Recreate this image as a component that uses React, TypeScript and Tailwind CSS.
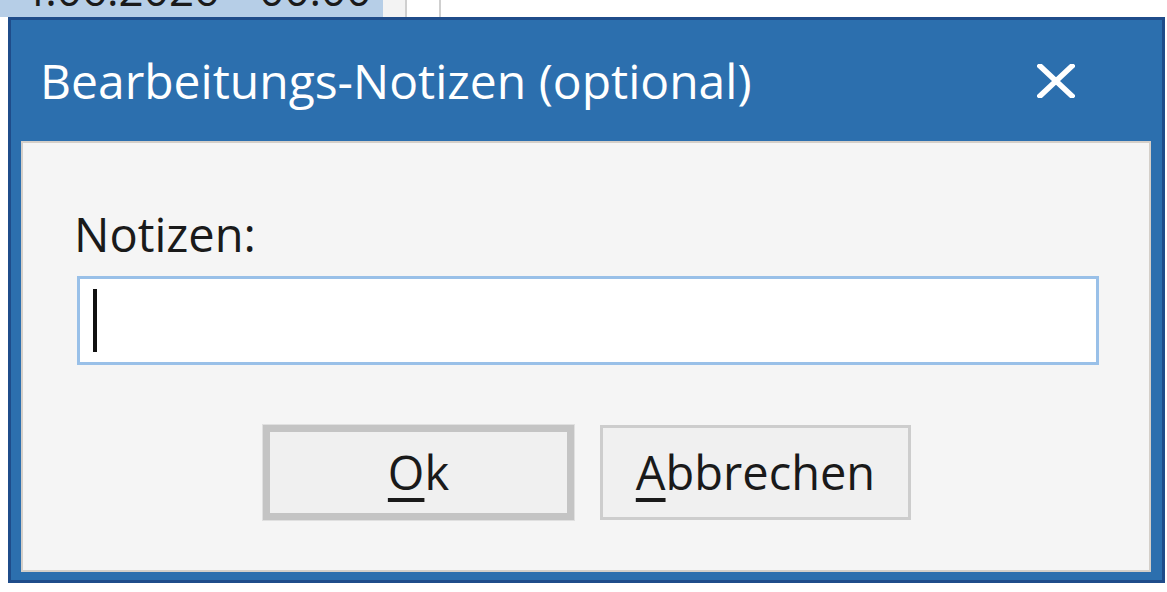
import React from "react";

export default function App() {
  return (
    <div className="relative h-[592px] w-[1167px] overflow-hidden bg-white font-['Open_Sans',sans-serif] text-[#1a1a1a]">
      {/* table row behind the dialog, only its lower edge shows */}
      <div className="flex h-[17px]">
        <div className="h-full w-[383px] overflow-hidden bg-[#b6cee7] pl-[20px]">
          <div className="mt-[-34px] flex gap-[40px] text-[44px] leading-[46px] whitespace-nowrap">
            <span>4.06.2026</span>
            <span>00:00</span>
          </div>
        </div>
        <div className="h-full w-[22px] bg-[#f3f3f3]" />
        <div className="h-full w-[2px] bg-[#cfcfcf]" />
        <div className="h-full w-[32px] bg-white" />
        <div className="h-full w-[2px] bg-[#cfcfcf]" />
        <div className="h-full flex-1 bg-white" />
      </div>

      {/* dialog */}
      <div className="ml-[8px] flex h-[566px] w-[1157px] flex-col border-[3px] border-[#1f4c8a] bg-[#2c6fae] pb-[8px] pl-[10px] pr-[11px]">
        <div className="flex h-[121px] shrink-0 items-center justify-between pl-[19px] pr-[76px]">
          <span className="text-[48px] leading-[48px] whitespace-nowrap text-white">
            Bearbeitungs-Notizen (optional)
          </span>
          <svg width="38" height="34" viewBox="0 0 38 34" fill="none">
            <path d="M3 2 L35 32 M35 2 L3 32" stroke="white" strokeWidth="5.5" strokeLinecap="square" />
          </svg>
        </div>

        <div className="flex flex-1 flex-col border-2 border-[#d4cfc9] bg-[#f5f5f5]">
          <label className="ml-[51px] mt-[68px] text-[47px] leading-[47px]">Notizen:</label>

          <div className="ml-[54px] mt-[18px] flex h-[89px] w-[1022px] items-center border-[3px] border-[#99c0e8] bg-white pl-[13px]">
            <span className="h-[63px] w-[4px] bg-[#111]" />
          </div>

          <div className="ml-[240px] mt-[60px] flex gap-[26px]">
            <button className="flex h-[95px] w-[311px] items-center justify-center border-[7px] border-[#c4c4c4] bg-[#f0f0f0] text-[47px] leading-[47px] outline outline-1 outline-[#e0e0e0]">
              <span>
                <span className="underline decoration-[4px] underline-offset-[8px]">O</span>k
              </span>
            </button>
            <button className="flex h-[95px] w-[311px] items-center justify-center border-[3px] border-[#cdcdcd] bg-[#f0f0f0] text-[47px] leading-[47px]">
              <span>
                <span className="underline decoration-[4px] underline-offset-[8px]">A</span>bbrechen
              </span>
            </button>
          </div>
        </div>
      </div>
    </div>
  );
}
